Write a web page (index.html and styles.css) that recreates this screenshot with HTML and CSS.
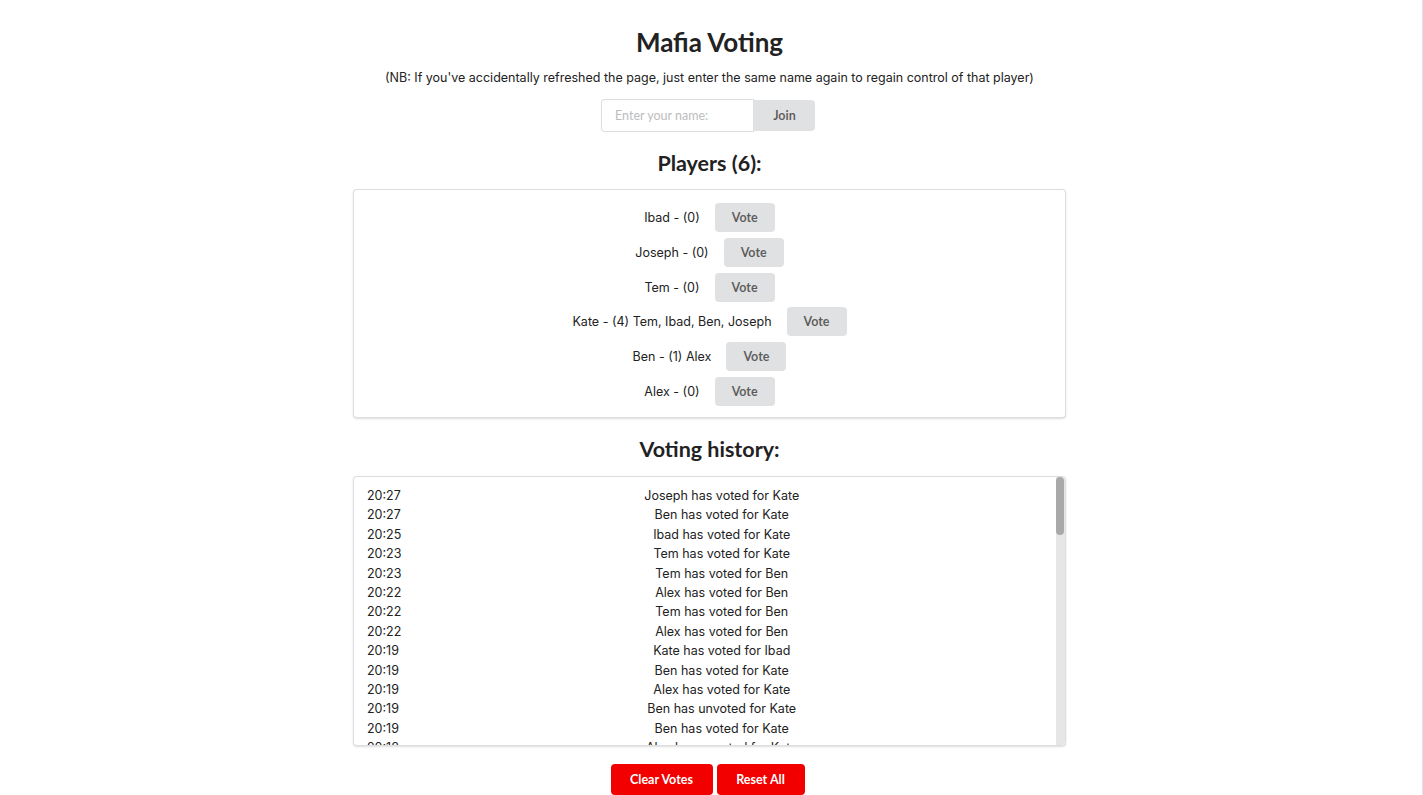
FILE: index.html
```html
<!DOCTYPE html>
<html>
<head>
<meta charset="utf-8">
<link rel="stylesheet" href="styles.css">
</head>
<body>
<div class="page">
  <h1 class="title">Mafia Voting</h1>
  <p class="note">(NB: If you've accidentally refreshed the page, just enter the same name again to regain control of that player)</p>
  <div class="join">
    <input class="name-input" type="text" placeholder="Enter your name:">
    <button class="btn join-btn">Join</button>
  </div>
  <h2 class="heading players-heading">Players (6):</h2>
  <div class="segment players">
    <div class="player"><span class="pname">Ibad - (0)</span><button class="btn vote">Vote</button></div>
    <div class="player"><span class="pname">Joseph - (0)</span><button class="btn vote">Vote</button></div>
    <div class="player"><span class="pname">Tem - (0)</span><button class="btn vote">Vote</button></div>
    <div class="player"><span class="pname">Kate - (4) Tem, Ibad, Ben, Joseph</span><button class="btn vote">Vote</button></div>
    <div class="player"><span class="pname">Ben - (1) Alex</span><button class="btn vote">Vote</button></div>
    <div class="player"><span class="pname">Alex - (0)</span><button class="btn vote">Vote</button></div>
  </div>
  <h2 class="heading history-heading">Voting history:</h2>
  <div class="segment history">
    <div class="log-viewport">
      <div class="log">
        <span class="time">20:27</span><span class="msg">Joseph has voted for Kate</span>
        <span class="time">20:27</span><span class="msg">Ben has voted for Kate</span>
        <span class="time">20:25</span><span class="msg">Ibad has voted for Kate</span>
        <span class="time">20:23</span><span class="msg">Tem has voted for Kate</span>
        <span class="time">20:23</span><span class="msg">Tem has voted for Ben</span>
        <span class="time">20:22</span><span class="msg">Alex has voted for Ben</span>
        <span class="time">20:22</span><span class="msg">Tem has voted for Ben</span>
        <span class="time">20:22</span><span class="msg">Alex has voted for Ben</span>
        <span class="time">20:19</span><span class="msg">Kate has voted for Ibad</span>
        <span class="time">20:19</span><span class="msg">Ben has voted for Kate</span>
        <span class="time">20:19</span><span class="msg">Alex has voted for Kate</span>
        <span class="time">20:19</span><span class="msg">Ben has unvoted for Kate</span>
        <span class="time">20:19</span><span class="msg">Ben has voted for Kate</span>
        <span class="time">20:18</span><span class="msg">Alex has unvoted for Kate</span>
        <span class="time">20:18</span><span class="msg">Alex has voted for Kate</span>
        <span class="time">20:17</span><span class="msg">Joseph has voted for Tem</span>
        <span class="time">20:17</span><span class="msg">Kate has voted for Ben</span>
        <span class="time">20:16</span><span class="msg">Ibad has voted for Tem</span>
        <span class="time">20:16</span><span class="msg">Tem has voted for Joseph</span>
        <span class="time">20:15</span><span class="msg">Ben has voted for Alex</span>
        <span class="time">20:15</span><span class="msg">Alex has voted for Ibad</span>
        <span class="time">20:14</span><span class="msg">Kate has voted for Joseph</span>
      </div>
    </div>
    <div class="scrollbar"><div class="thumb"></div></div>
  </div>
  <div class="actions">
    <button class="btn red clear">Clear Votes</button>
    <button class="btn red reset">Reset All</button>
  </div>
</div>
</body>
</html>
```

FILE: styles.css
```css
html, body {
  margin: 0;
  padding: 0;
  background: #fff;
}
body {
  font-family: Inter, "Noto Sans", sans-serif;
  font-size: 12.5px;
  color: #222;
  height: 795px;
  overflow: hidden;
}
.page {
  box-sizing: border-box;
  width: 1423px;
  height: 795px;
  border-right: 1px solid #e2e2e2;
  display: flex;
  flex-direction: column;
  align-items: center;
  padding-right: 3px;
}
.title {
  font-family: Lato, sans-serif;
  font-weight: 700;
  font-size: 26px;
  line-height: 32px;
  color: #222;
  margin: 26px 0 0 0;
}
.note {
  margin: 12px 0 0 0;
  line-height: 16px;
  font-size: 12.5px;
  color: #222;
}
.join {
  display: flex;
  align-items: center;
  margin-top: 13px;
  margin-right: 3px;
}
.name-input {
  box-sizing: border-box;
  width: 153px;
  height: 33px;
  border: 1px solid rgba(34,36,38,.15);
  border-radius: 4px 0 0 4px;
  padding: 0 13px;
  font-family: Lato, sans-serif;
  font-size: 12.5px;
  color: #222;
  outline: none;
}
.name-input::placeholder {
  color: #bdbdbd;
}
.btn {
  font-family: Lato, sans-serif;
  font-weight: 700;
  font-size: 12.5px;
  border: none;
  border-radius: 4px;
  cursor: pointer;
  padding: 0;
}
.join-btn {
  width: 61px;
  height: 31px;
  background: #e0e1e2;
  color: rgba(0,0,0,.6);
  border-radius: 0 4px 4px 0;
}
.heading {
  font-family: Lato, sans-serif;
  font-weight: 700;
  font-size: 21.5px;
  line-height: 27px;
  color: #222;
  margin: 0;
}
.players-heading {
  margin-top: 18px;
}
.segment {
  box-sizing: border-box;
  width: 713px;
  border: 1px solid rgba(34,36,38,.15);
  border-radius: 4px;
  box-shadow: 0 1px 2px 0 rgba(34,36,38,.15);
  background: #fff;
}
.players {
  margin-top: 12px;
  height: 229px;
  padding: 13px 0 11px 0;
  display: flex;
  flex-direction: column;
  align-items: center;
  gap: 5.8px;
}
.player {
  display: flex;
  align-items: center;
  height: 29px;
}
.pname {
  font-size: 12.5px;
  color: #222;
}
.vote {
  margin-left: 15px;
  width: 60px;
  height: 29px;
  background: #e0e1e2;
  color: rgba(0,0,0,.6);
}
.history-heading {
  margin-top: 18px;
}
.history {
  margin-top: 13px;
  height: 270px;
  display: flex;
  overflow: hidden;
}
.log-viewport {
  flex: 1;
  overflow: hidden;
  padding-top: 9px;
}
.log {
  display: grid;
  grid-template-columns: auto 1fr;
  padding: 0 14px 0 13px;
  line-height: 19.4px;
  font-size: 12.5px;
  color: #222;
}
.time {
  text-align: left;
}
.msg {
  text-align: center;
}
.scrollbar {
  width: 9px;
  flex: none;
  background: #e6e6e6;
  border-radius: 0 3px 3px 0;
}
.thumb {
  width: 8px;
  height: 58px;
  background: #a9a9a9;
  border-radius: 4px;
}
.actions {
  display: flex;
  gap: 4px;
  margin-top: 18px;
  margin-right: 4px;
}
.red {
  background: #f20000;
  color: #fff;
  height: 31px;
}
.clear {
  width: 102px;
}
.reset {
  width: 88px;
}
```
